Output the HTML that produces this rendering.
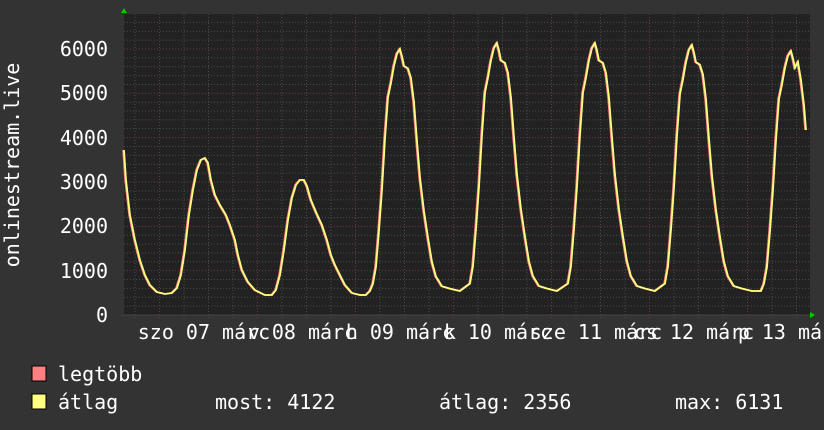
<!DOCTYPE html>
<html><head><meta charset="utf-8"><style>
html,body{margin:0;padding:0;background:#333;width:824px;height:430px;overflow:hidden}
svg text{font-family:"DejaVu Sans Mono","Liberation Mono",monospace;fill:#fff}
</style></head><body>
<svg id="s" width="824" height="430" xmlns="http://www.w3.org/2000/svg">
<rect x="0" y="0" width="824" height="430" fill="#333"/>
<rect x="124" y="14" width="686" height="301" fill="#222"/>
<g id="grid"></g>
<path id="red" fill="none" stroke="#ff8080" stroke-width="1.5"/>
<path id="yel" fill="none" stroke="#ffff80" stroke-width="1.8"/>
<polygon points="121,13 127,13 124,8" fill="#0c0"/>
<polygon points="810,312 810,318 815,315" fill="#0c0"/>
<g font-size="20" text-anchor="end">
<text x="108" y="56">6000</text>
<text x="108" y="100">5000</text>
<text x="108" y="145">4000</text>
<text x="108" y="189">3000</text>
<text x="108" y="233">2000</text>
<text x="108" y="278">1000</text>
<text x="108" y="322">0</text>
</g>
<g font-size="20" text-anchor="middle">
<text x="204" y="339">szo 07 márc</text>
<text x="302" y="339">v 08 márc</text>
<text x="400" y="339">h 09 márc</text>
<text x="498" y="339">k 10 márc</text>
<text x="596" y="339">sze 11 márc</text>
<text x="694" y="339">cs 12 márc</text>
<text x="792" y="339">p 13 márc</text>
</g>
<text font-size="20" text-anchor="middle" transform="translate(19,165) rotate(-90)">onlinestream.live</text>
<rect x="32" y="366" width="14" height="15" fill="#ff8080" stroke="#000" stroke-width="1"/>
<rect x="32" y="394" width="14" height="15" fill="#ffff80" stroke="#000" stroke-width="1"/>
<g font-size="20">
<text x="58" y="381">legtöbb</text>
<text x="58" y="409">átlag</text>
<text x="215" y="409">most: 4122</text>
<text x="439" y="409">átlag: 2356</text>
<text x="675" y="409">max: 6131</text>
</g>
</svg>
<script>
var g=document.getElementById('grid'),h='';
for(var i=1;i<=33;i++){var y=315-i*8.867;var maj=(i%5==0);
h+='<line x1="124" x2="810" y1="'+y+'" y2="'+y+'" stroke="'+(maj?'#6a3a3a':'#4a4a4a')+'" stroke-dasharray="1,2"/>';}
for(var x=135;x<810;x+=24.5){var maj=Math.abs(((x-159)/98)-Math.round((x-159)/98))<0.02;
h+='<line y1="14" y2="319" x1="'+x+'" x2="'+x+'" stroke="'+(maj?'#6a3a3a':'#4a4a4a')+'" stroke-dasharray="1,2"/>';}
h+='<line x1="121" x2="810" y1="315" y2="315" stroke="#444"/>';
g.innerHTML=h;
var pts=[[124,150],[126,180],[130,215],[135,240],[140,260],[145,275],[150,285],[157,292],[165,294],[172,293],[177,288],[181,275],[185,250],[189,215],[193,190],[197,170],[201,160],[205,158],[208,163],[211,180],[215,195],[220,205],[226,215],[230,225],[235,240],[238,255],[242,270],[248,282],[255,290],[265,295],[272,295],[276,290],[280,275],[284,250],[288,220],[292,198],[296,185],[300,180],[304,180],[307,186],[311,200],[316,212],[322,225],[327,240],[331,255],[335,265],[340,275],[345,285],[352,293],[360,295],[366,295]];
var T=[[-30,0],[-27,.03],[-24,.1],[-21,.25],[-18,.42],[-15,.63],[-12,.8],[-9,.86],[-6,.93],[-3,.98],[0,1],[2,.97],[4,.93],[8,.92],[11,.88],[14,.78],[17,.62],[20,.47],[24,.33],[28,.22],[32,.12],[36,.06],[42,.02],[50,.01],[60,0]];
var peaks=[[400,49],[497,43],[595,43],[692,45],[791,51]];
peaks.forEach(function(p,k){var base=291;T.forEach(function(t){var x=p[0]+t[0];if(k==4&&t[0]>4)return;if(k<4&&k>0&&t[0]==-30)return;pts.push([x,base-(base-p[1])*t[1]]);});});
pts.push([798,62],[801,80],[804,105],[806,130]);
var d='M'+pts.map(function(p){return p[0]+','+p[1].toFixed(1)}).join(' L');
document.getElementById('red').setAttribute('d',d);
document.getElementById('red').setAttribute('transform','translate(-1,0)');
document.getElementById('yel').setAttribute('d',d);
</script>
</body></html>
